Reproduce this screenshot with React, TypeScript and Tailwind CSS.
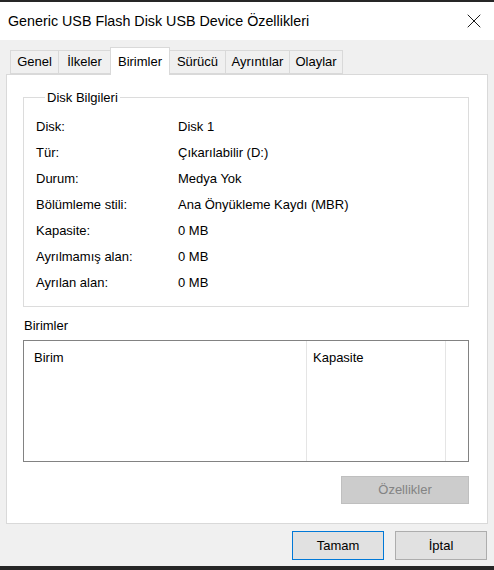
import { X } from "lucide-react";

const rows: [string, string][] = [
  ["Disk:", "Disk 1"],
  ["Tür:", "Çıkarılabilir (D:)"],
  ["Durum:", "Medya Yok"],
  ["Bölümleme stili:", "Ana Önyükleme Kaydı (MBR)"],
  ["Kapasite:", "0 MB"],
  ["Ayrılmamış alan:", "0 MB"],
  ["Ayrılan alan:", "0 MB"],
];

const tabs: { label: string; w: string }[] = [
  { label: "Genel", w: "w-[49px]" },
  { label: "İlkeler", w: "w-[53px]" },
  { label: "Birimler", w: "w-[60px]" },
  { label: "Sürücü", w: "w-[57px]" },
  { label: "Ayrıntılar", w: "w-[65px]" },
  { label: "Olaylar", w: "w-[54px]" },
];

export default function App() {
  return (
    <div
      className="w-[494px] h-[570px] flex flex-col bg-[#f0f0f0] text-black text-[13px] overflow-hidden"
      style={{ fontFamily: '"Liberation Sans", Arial, sans-serif' }}
    >
      {/* ekran üst kenarı */}
      <div className="h-[2px] bg-[#262626]" />

      {/* başlık çubuğu */}
      <div className="h-[38px] bg-white flex items-center justify-between pl-[8px] pr-[8px]">
        <span className="text-[14.3px] leading-none">Generic USB Flash Disk USB Device Özellikleri</span>
        <X className="w-[24px] h-[24px] text-black" strokeWidth={0.9} />
      </div>

      <div className="flex-1 flex flex-col px-[6px] pt-[8px]">
        {/* sekmeler */}
        <div className="flex items-end pl-[4px] h-[26px] relative z-10">
          {tabs.map((t) =>
            t.label === "Birimler" ? (
              <div
                key={t.label}
                className={`${t.w} h-[28px] -mb-[1px] -ml-[1px] flex items-center justify-center bg-white border border-b-0 border-[#d9d9d9]`}
              >
                {t.label}
              </div>
            ) : (
              <div
                key={t.label}
                className={`${t.w} h-[24px] flex items-center justify-center bg-[#f0f0f0] border border-[#d9d9d9] -ml-[1px] first:ml-0`}
              >
                {t.label}
              </div>
            )
          )}
        </div>

        {/* sekme paneli */}
        <div className="h-[450px] bg-white border border-[#d9d9d9] flex flex-col pl-[16px] pr-[18px] pt-[13px]">
          <fieldset className="border border-[#dcdcdc] h-[219px] px-[12px]">
            <legend className="px-[2px] ml-[9px]">Disk Bilgileri</legend>
            <div className="flex flex-col pt-[6px]">
              {rows.map(([k, v]) => (
                <div key={k} className="h-[26px] flex items-center">
                  <span className="w-[142px]">{k}</span>
                  <span>{v}</span>
                </div>
              ))}
            </div>
          </fieldset>

          <div className="mt-[10px] pl-[1px] h-[17px] leading-[17px]">Birimler</div>

          <div className="mt-[6px] h-[122px] border border-[#828282] flex">
            <div className="w-[283px] border-r border-[#e5e5e5] pl-[10px] pt-[7px]">Birim</div>
            <div className="w-[139px] border-r border-[#e5e5e5] pl-[6px] pt-[7px]">Kapasite</div>
            <div className="flex-1" />
          </div>

          <div className="flex justify-end mt-[14px]">
            <button className="w-[128px] h-[28px] bg-[#cccccc] text-[#838383] border border-[#bfbfbf]">
              Özellikler
            </button>
          </div>
        </div>

        {/* alt düğmeler */}
        <div className="flex justify-end gap-[11px] mt-[7px] pr-[1px]">
          <button className="w-[92px] h-[29px] bg-[#e1e1e1] border border-[#0078d7]">Tamam</button>
          <button className="w-[92px] h-[29px] bg-[#e1e1e1] border border-[#adadad]">İptal</button>
        </div>
      </div>

      <div className="h-[4px] bg-[#262626]" />
    </div>
  );
}
